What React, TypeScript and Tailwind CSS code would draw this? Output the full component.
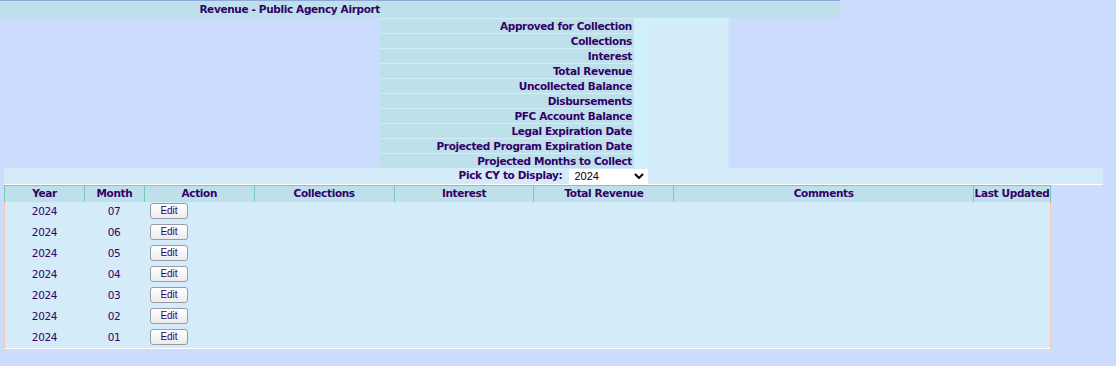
const SUMMARY_LABELS = [
  "Approved for Collection",
  "Collections",
  "Interest",
  "Total Revenue",
  "Uncollected Balance",
  "Disbursements",
  "PFC Account Balance",
  "Legal Expiration Date",
  "Projected Program Expiration Date",
  "Projected Months to Collect",
];

const COLUMNS = [
  { label: "Year", width: "w-[80px]" },
  { label: "Month", width: "w-[60px]" },
  { label: "Action", width: "w-[110px]" },
  { label: "Collections", width: "w-[140px]" },
  { label: "Interest", width: "w-[140px]" },
  { label: "Total Revenue", width: "w-[140px]" },
  { label: "Comments", width: "w-[300px]" },
  { label: "Last Updated", width: "w-[78px] border-r" },
];

const MONTHS = ["07", "06", "05", "04", "03", "02", "01"];

export default function App() {
  return (
    <div className="min-h-[366px] bg-[#ccdcff] font-['DejaVu_Sans',sans-serif] text-[10.5px] tracking-[-0.35px] text-[#330066]">
      <div className="w-[840px] border-t border-[#8fa5dc]">
        <div className="flex h-[17px] items-center bg-[#bde0ea]">
          <div className="w-[380px] text-right font-bold">
            Revenue - Public Agency Airport
          </div>
        </div>

        <div className="flex">
          <div className="w-[380px]" />

          <div className="w-[254px]">
            {SUMMARY_LABELS.map((label) => (
              <div
                key={label}
                className="h-[15px] border-t border-[#d2eef6] bg-[#bde0ea] pr-[2px] text-right font-bold leading-[14px]"
              >
                {label}
              </div>
            ))}
          </div>

          <div className="flex w-[95px] border-r border-[#c6ecf7] bg-[#cff0fc] pt-[4px] pb-[1px] pl-[15px]">
            <div className="flex-1 bg-[#d4ebfa]" />
          </div>
        </div>
      </div>

      <div className="ml-[4px] w-[1099px]">
        <div className="flex h-[17px] items-center justify-center gap-[7px] border-b border-white bg-[#d4ebfa]">
          <span className="font-bold">Pick CY to Display:</span>
          <Select value="2024" />
        </div>
      </div>

      <div className="ml-[4px] w-[1047px]">
        <div className="flex h-[17px] border-t border-[#78c8c0] bg-[#bde0ea]">
          {COLUMNS.map((col) => (
            <div
              key={col.label}
              className={`${col.width} flex items-center justify-center border-l border-[#78c8c0] font-bold`}
            >
              {col.label}
            </div>
          ))}
        </div>

        <div className="border-x border-b border-x-[#f3c9a6] border-b-white bg-[#d4ebfa]">
          {MONTHS.map((month) => (
            <div
              key={month}
              className="flex h-[21px] items-start pt-[1px] leading-[16px] last:h-[20px]"
            >
              <div className="w-[79px] text-center">2024</div>
              <div className="w-[60px] text-center">{month}</div>
              <div className="w-[110px] pl-[6px]">
                <EditButton />
              </div>
            </div>
          ))}
        </div>
      </div>
    </div>
  );
}

function Select({ value }: { value: string }) {
  return (
    <div className="flex h-[15px] w-[79px] items-center justify-between bg-white pr-[3px] pl-[5px] font-['Liberation_Sans',sans-serif] text-[11px] tracking-normal text-black">
      <span>{value}</span>
      <svg width="10" height="6" viewBox="0 0 10 6" className="mr-[1px]">
        <path d="M1 1 L5 5 L9 1" fill="none" stroke="#000" strokeWidth="2" />
      </svg>
    </div>
  );
}

function EditButton() {
  return (
    <button
      type="button"
      className="flex h-[16px] w-[38px] items-center justify-center rounded-[3px] border border-[#9a9aa8] bg-gradient-to-b from-white to-[#ececec] font-['Liberation_Sans',sans-serif] text-[10px] tracking-normal text-[#330066]"
    >
      Edit
    </button>
  );
}
